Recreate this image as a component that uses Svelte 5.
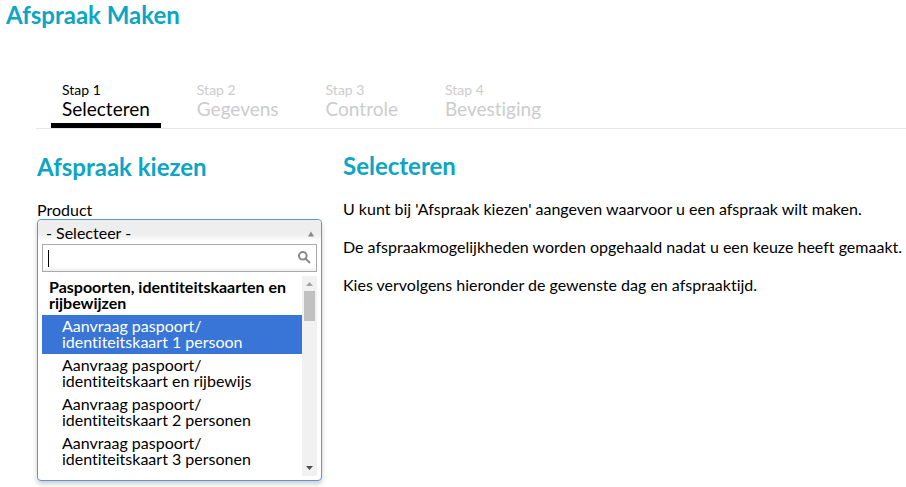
<script lang="ts">
    const steps = ['Selecteren', 'Gegevens', 'Controle', 'Bevestiging'];

    const products = [
        'Aanvraag paspoort/ identiteitskaart 1 persoon',
        'Aanvraag paspoort/ identiteitskaart en rijbewijs',
        'Aanvraag paspoort/ identiteitskaart 2 personen',
        'Aanvraag paspoort/ identiteitskaart 3 personen'
    ];

    let current = $state(0);
    let highlighted = $state(0);
    let open = $state(true);
    let query = $state('');
    let selected = $state('- Selecteer -');

    let results = $derived(
        products.filter((p) => p.toLowerCase().includes(query.toLowerCase()))
    );

    function choose(product: string) {
        selected = product;
        open = false;
    }
</script>

<main>
    <h1>Afspraak Maken</h1>

    <div class="wizard">
        <ol class="steps">
            {#each steps as step, i (step)}
                <li class:active={i === current}>
                    <span class="number">Stap {i + 1}</span>
                    <span class="name">{step}</span>
                </li>
            {/each}
        </ol>

        <div class="columns">
            <section class="picker">
                <h2>Afspraak kiezen</h2>
                <label for="product">Product</label>
                <div class="select" class:open>
                    <button
                        id="product"
                        class="choice"
                        type="button"
                        aria-expanded={open}
                        onclick={() => (open = !open)}
                    >
                        <span>{selected}</span>
                        <svg class="arrow" viewBox="0 0 6 6" aria-hidden="true">
                            <path d="M3 0.5 6 5.5H0z" />
                        </svg>
                    </button>

                    {#if open}
                        <div class="drop">
                            <div class="search">
                                <input type="text" aria-label="Zoeken" autocomplete="off" bind:value={query} />
                                {#if query === ''}
                                    <span class="caret"></span>
                                {/if}
                                <svg class="glass" viewBox="0 0 13 13" aria-hidden="true">
                                    <circle cx="4.8" cy="4.8" r="3.8" />
                                    <path d="M7.6 7.6 12 12" />
                                </svg>
                            </div>
                            <div class="results">
                                <div class="list" role="listbox" aria-label="Product">
                                    <div class="group">Paspoorten, identiteitskaarten en rijbewijzen</div>
                                    {#each results as product, i (product)}
                                        <button
                                            type="button"
                                            role="option"
                                            aria-selected={i === highlighted}
                                            class:highlighted={i === highlighted}
                                            onmouseenter={() => (highlighted = i)}
                                            onclick={() => choose(product)}
                                        >
                                            {product}
                                        </button>
                                    {/each}
                                </div>
                                <div class="scrollbar" aria-hidden="true">
                                    <svg viewBox="0 0 7 4"><path d="M3.5 0 7 4H0z" /></svg>
                                    <span class="thumb"></span>
                                    <svg class="down" viewBox="0 0 7 4"><path d="M0 0H7L3.5 4z" /></svg>
                                </div>
                            </div>
                        </div>
                    {/if}
                </div>
            </section>

            <section class="info">
                <h2>Selecteren</h2>
                <p>U kunt bij 'Afspraak kiezen' aangeven waarvoor u een afspraak wilt maken.</p>
                <p>De afspraakmogelijkheden worden opgehaald nadat u een keuze heeft gemaakt.</p>
                <p>Kies vervolgens hieronder de gewenste dag en afspraaktijd.</p>
            </section>
        </div>
    </div>
</main>

<style>
    :global(body) {
        margin: 0;
        background: #fff;
    }

    main {
        font-family: Lato, sans-serif;
        font-size: 16px;
        line-height: 19px;
        font-variant-ligatures: none;
        color: #000;
    }

    h1,
    h2 {
        margin: 0;
        font-size: 24px;
        line-height: 30px;
        font-weight: 700;
        color: #0ca5c4;
    }

    h1 {
        padding-left: 6px;
    }

    .wizard {
        margin: 52px 0 0 36px;
        padding-bottom: 6px;
    }

    .steps {
        display: flex;
        gap: 25px;
        list-style: none;
        margin: 0;
        padding: 0 15px;
        border-bottom: 1px solid #e5e5e5;
    }

    .steps li {
        display: flex;
        flex-direction: column;
        padding: 0 11px 3px;
        border-bottom: 5px solid transparent;
        color: #ccc;
    }

    .steps li.active {
        color: #000;
        border-color: #000;
    }

    .number {
        font-size: 14px;
        line-height: 16px;
    }

    .name {
        font-size: 19px;
        line-height: 22px;
    }

    .columns {
        display: flex;
        align-items: flex-start;
        gap: 21px;
        padding: 22px 0 0 1px;
    }

    .picker {
        flex: 0 0 285px;
        padding-top: 1px;
    }

    label {
        display: block;
        margin-top: 18px;
    }

    .select {
        border: 1px solid #aaa;
        border-radius: 4px;
        background: #fff;
    }

    .select.open {
        border-color: #5897d8;
        box-shadow: 0 3px 5px rgba(0, 0, 0, 0.2);
    }

    button {
        border: none;
        font: inherit;
        font-variant-ligatures: inherit;
        color: inherit;
        text-align: left;
        cursor: pointer;
    }

    .choice {
        display: flex;
        align-items: center;
        justify-content: space-between;
        width: 100%;
        padding: 2px 7px 0 8px;
        line-height: 22px;
        border-radius: 4px 4px 0 0;
        background: linear-gradient(to bottom, #eee 60%, #fff 90%);
    }

    .arrow {
        width: 6px;
        height: 6px;
        margin-top: 1px;
        fill: #888;
    }

    .drop {
        padding: 0 4px 4px;
    }

    .search {
        position: relative;
        display: flex;
        align-items: center;
        height: 26px;
        border: 1px solid #aaa;
        background: linear-gradient(to bottom, #fff 85%, #eee 99%);
    }

    .search input {
        flex: 1;
        min-width: 0;
        padding: 4px 5px;
        border: none;
        outline: none;
        background: none;
        font: inherit;
    }

    .caret {
        position: absolute;
        left: 5px;
        top: 5px;
        width: 1px;
        height: 17px;
        background: #000;
    }

    .search input:focus + .caret {
        display: none;
    }

    .glass {
        width: 13px;
        height: 13px;
        margin: 0 5px 2px 0;
        fill: none;
        stroke: #888;
        stroke-width: 2;
    }

    .results {
        display: flex;
        height: 200px;
        margin-top: 4px;
    }

    .list {
        flex: 1;
        overflow-y: auto;
        scrollbar-width: none;
        line-height: 16px;
    }

    .group {
        padding: 3px 7px 4px;
        font-weight: 700;
    }

    .list button {
        display: block;
        width: 100%;
        padding: 3px 40px 4px 20px;
        background: none;
    }

    .list button.highlighted {
        background: #3875d7;
        color: #fff;
    }

    .scrollbar {
        display: flex;
        flex-direction: column;
        align-items: center;
        gap: 5px;
        width: 15px;
        padding: 6px 0;
        box-sizing: border-box;
        background: #f1f1f1;
    }

    .scrollbar svg {
        width: 7px;
        height: 4px;
        fill: #a3a3a3;
    }

    .scrollbar .down {
        margin-top: auto;
        fill: #505050;
    }

    .thumb {
        width: 11px;
        height: 30px;
        background: #c1c1c1;
    }

    .info {
        flex: 1;
        min-width: 0;
    }

    p {
        margin: 18px 0 19px;
    }

    p + p {
        margin-top: 0;
    }
</style>
